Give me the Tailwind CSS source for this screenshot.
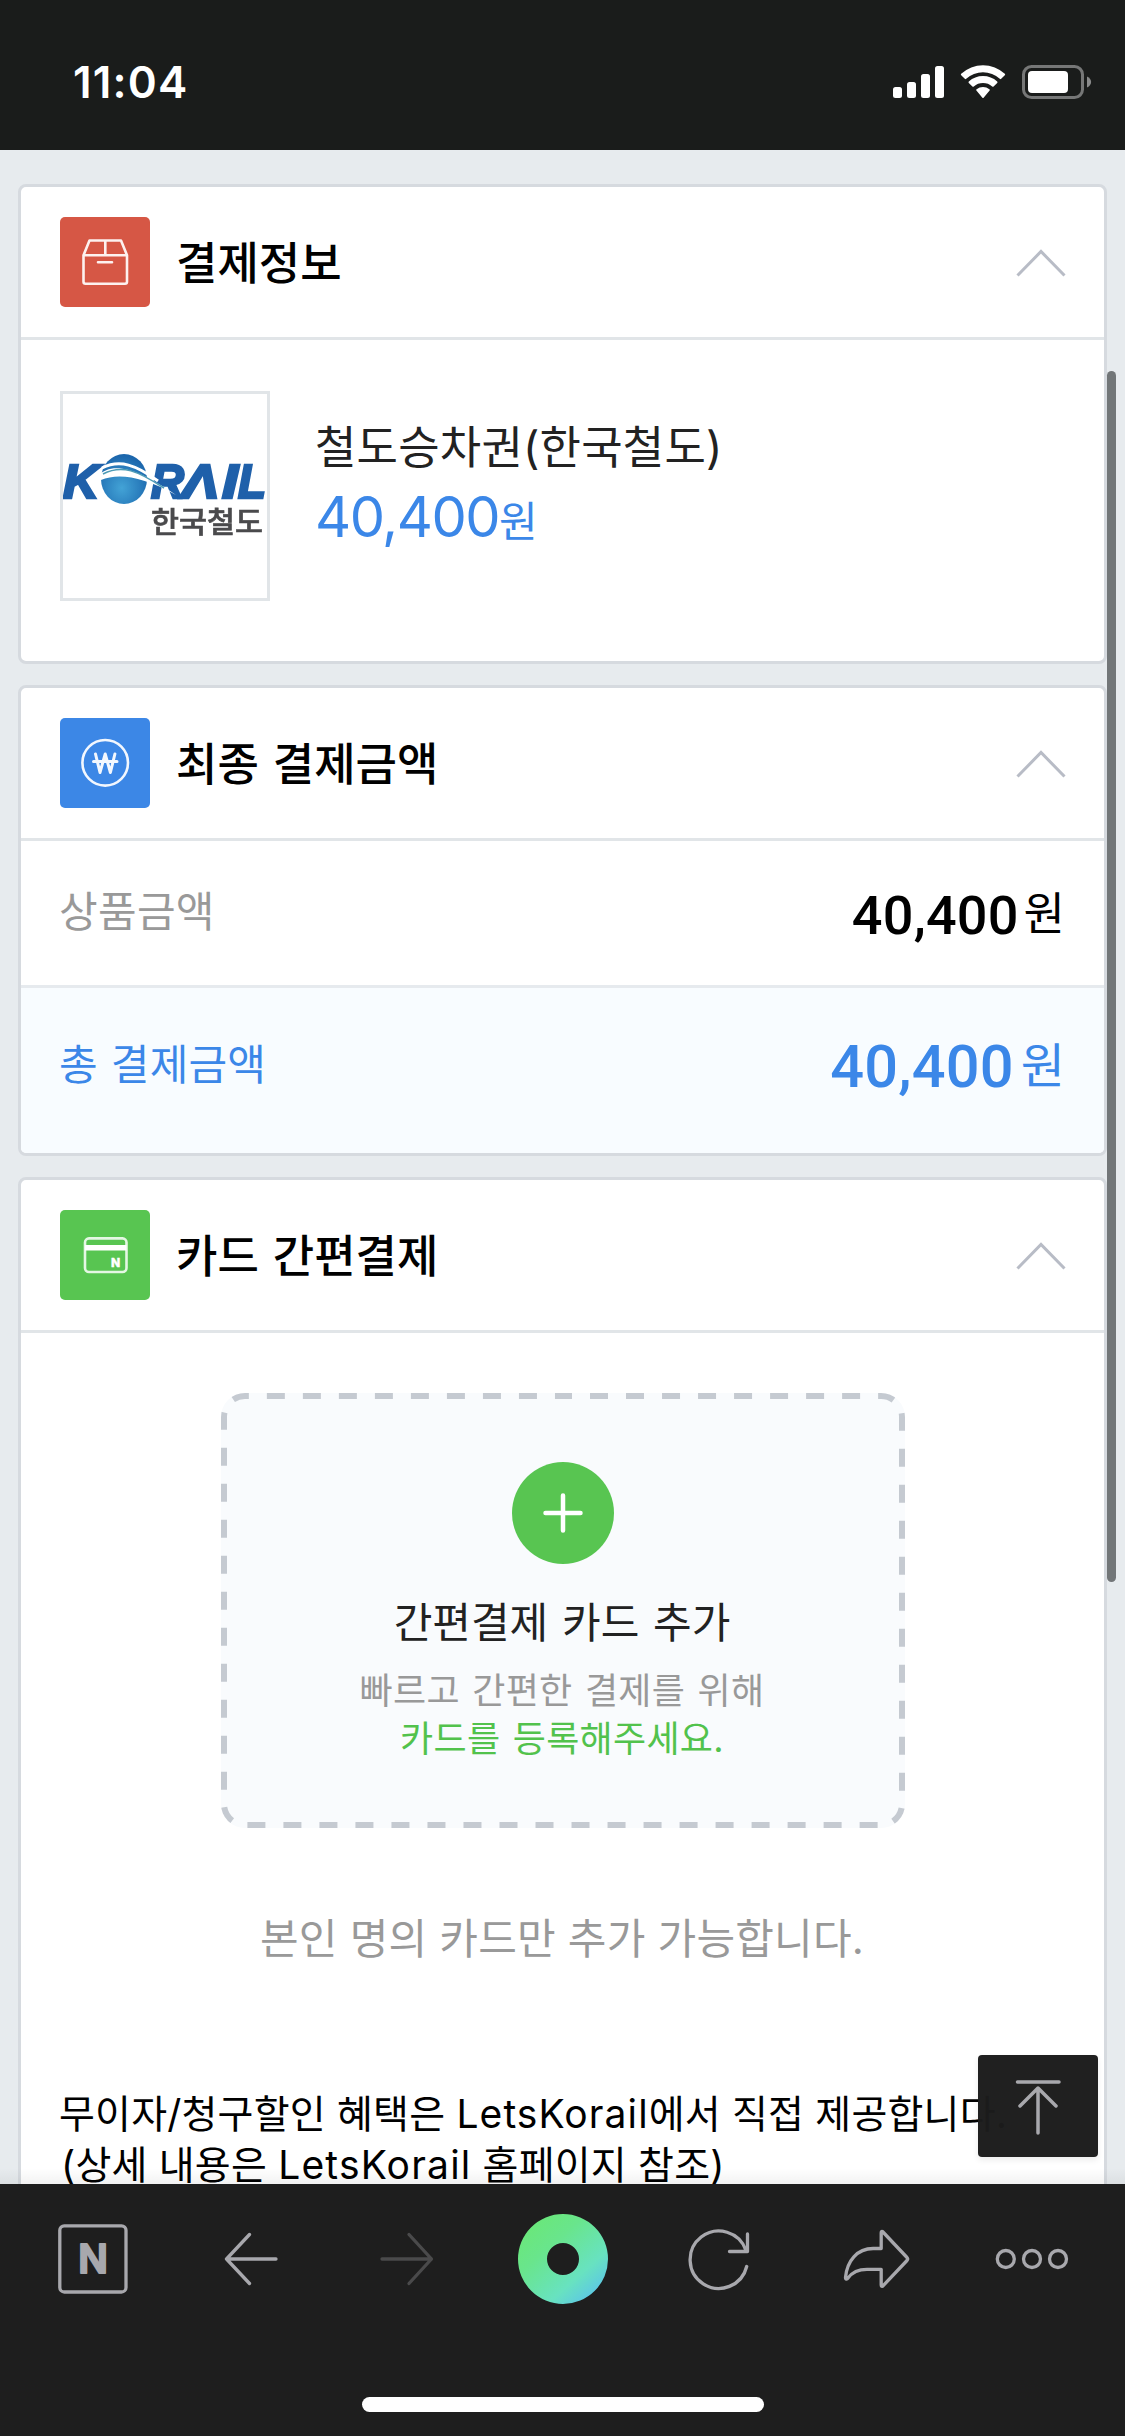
<!DOCTYPE html>
<html lang="ko">
<head>
<meta charset="utf-8">
<title>결제</title>
<script src="https://cdn.jsdelivr.net/npm/@tailwindcss/browser@4"></script>
</head>
<body class="w-[1125px] h-[2436px] overflow-hidden bg-[#e7ebee] font-['Inter','Noto_Sans_CJK_KR',sans-serif] text-black">
<div class="relative flex h-full flex-col">

  <!-- status bar -->
  <header class="flex h-[150px] shrink-0 items-center justify-between bg-[#1a1c1b] pt-[14px] pl-[73px] pr-[33px] text-white">
    <span class="text-[44px] leading-[50px] font-semibold tracking-[1.2px]">11:04</span>
    <svg class="h-[36px] w-[199px]" viewBox="893 64 199 36" fill="#fff">
      <rect x="893" y="87" width="9" height="11" rx="2.5"/>
      <rect x="907" y="82" width="9" height="16" rx="2.5"/>
      <rect x="921" y="74" width="9" height="24" rx="2.5"/>
      <rect x="935" y="66" width="9" height="32" rx="2.5"/>
      <path d="M961.2 73.8a32 32 0 0 1 43.6 0a1 1 0 0 1 0 1.4l-3.600 3.600a1 1 0 0 1-1.400 0a25 25 0 0 0-33.600 0a1 1 0 0 1-1.400 0l-3.600-3.600a1 1 0 0 1 0-1.400z"/>
      <path d="M968.800 81.600a21 21 0 0 1 28.400 0a1 1 0 0 1 0 1.400l-3.600 3.500a1 1 0 0 1-1.400 0a14 14 0 0 0-18.400 0a1 1 0 0 1-1.400 0l-3.600-3.500a1 1 0 0 1 0-1.400z"/>
      <path d="M976.600 89.200a10.500 10.500 0 0 1 12.800 0a1 1 0 0 1 0 1.600l-5.600 6.600a1 1 0 0 1-1.600 0l-5.600-6.600a1 1 0 0 1 0-1.600z"/>
      <rect x="1023.500" y="66.500" width="59" height="31" rx="8" fill="none" stroke="#767777" stroke-width="3"/>
      <rect x="1028" y="71" width="40" height="22" rx="4"/>
      <path d="M1087 76.500c5.500 2.500 5.500 8.500 0 11z" fill="#8a8b8b"/>
    </svg>
  </header>

  <main class="flex min-h-0 flex-1 flex-col gap-[21px] overflow-hidden pt-[34px] px-[18px]">

    <section class="h-[480px] w-[1089px] shrink-0 rounded-[8px] border-[3px] border-[#d6dadf] bg-white">
      <div class="flex h-[153px] items-center border-b-[3px] border-[#e1e5e8] px-[39px]">
        <svg class="size-[90px] rounded-[5px] bg-[#d65745]" viewBox="0 0 90 90" fill="none" stroke="#fdf1ef" stroke-width="2.600" stroke-linejoin="round" stroke-linecap="round">
          <path d="M23.500 38.300h43.500v26.500a2 2 0 0 1-2 2H25.500a2 2 0 0 1-2-2zM23.500 38.300L29.500 23.500h31.500l6 14.800M45.300 23.500v14.800M38 45.200h14"/>
        </svg>
        <h2 class="ml-[26px] pt-[3px] text-[45px] leading-[60px] font-medium">결제정보</h2>
        <svg class="ml-auto mt-[1px] mr-[-1px] h-[28px] w-[50px]" viewBox="0 0 50 28" fill="none" stroke="#b8bcc6" stroke-width="3"><path d="M1.500 26.500L25 2.500l23.500 24"/></svg>
      </div>
      <div class="flex px-[39px] pt-[51px]">
        <div class="size-[210px] border-[3px] border-[#e1e5e8]">
          <svg class="size-[204px] blur-[0.7px]" viewBox="63 394 204 204">
            <defs>
              <radialGradient id="globe" cx="45%" cy="68%" r="65%"><stop offset="0" stop-color="#43a3d6"/><stop offset="0.600" stop-color="#2b7fbe"/><stop offset="1" stop-color="#1c66ac"/></radialGradient>
            </defs>
            <g fill="#1f60aa" stroke="#1f60aa" stroke-width="2.600" font-family="Liberation Sans" font-weight="700" font-style="italic" font-size="48">
              <text x="63" y="498" textLength="36" lengthAdjust="spacingAndGlyphs">K</text>
              <text x="151" y="498" textLength="33" lengthAdjust="spacingAndGlyphs">R</text>
              <text x="182" y="498" textLength="37" lengthAdjust="spacingAndGlyphs">Λ</text>
              <text x="222" y="498" textLength="16" lengthAdjust="spacingAndGlyphs">I</text>
              <text x="238" y="498" textLength="28" lengthAdjust="spacingAndGlyphs">L</text>
            </g>
            <ellipse cx="124" cy="479" rx="23" ry="25" fill="url(#globe)"/>
            <path d="M98 476C112 461 137 468 176 495C142 476 118 473 101 480z" fill="#fff"/>
            <path d="M102 468C120 459 136 465 158 481" fill="none" stroke="#fff" stroke-width="3"/>
            <path d="M103 474C122 464 138 471 164 488" fill="none" stroke="#4d9bb5" stroke-width="1.500"/>
            <text x="151" y="533" textLength="112" lengthAdjust="spacingAndGlyphs" font-size="29" font-weight="500" stroke="#4a4a4c" stroke-width="0.600" fill="#4a4a4c" font-family="Noto Sans CJK KR">한국철도</text>
          </svg>
        </div>
        <div class="ml-[45px] mt-[32px] flex flex-col gap-2">
          <p class="text-[45px] leading-[50px] tracking-[0.2px] text-[#222]">철도승차권(한국철도)</p>
          <p class="text-[56px] leading-[72px] text-[#3b87e8]"><span class="tracking-[-1.5px]">40,400</span><span class="text-[42px]">원</span></p>
        </div>
      </div>
    </section>

    <section class="h-[471px] w-[1089px] shrink-0 overflow-hidden rounded-[8px] border-[3px] border-[#d6dadf] bg-white">
      <div class="flex h-[153px] items-center border-b-[3px] border-[#e1e5e8] px-[39px]">
        <svg class="size-[90px] rounded-[5px] bg-[#3c87e6]" viewBox="0 0 90 90" fill="none" stroke="#f2f7fe" stroke-width="2.600" stroke-linejoin="round" stroke-linecap="round">
          <circle cx="45.200" cy="44.800" r="22.800"/>
          <path stroke-width="3" d="M35.500 36l4.500 18.500L45.200 36L50.400 54.500l4.500-18.500M33.500 43.500h23.500"/>
        </svg>
        <h2 class="ml-[26px] pt-[3px] text-[45px] leading-[60px] font-medium [word-spacing:2px]">최종 결제금액</h2>
        <svg class="ml-auto mt-[1px] mr-[-1px] h-[28px] w-[50px]" viewBox="0 0 50 28" fill="none" stroke="#b8bcc6" stroke-width="3"><path d="M1.500 26.500L25 2.500l23.500 24"/></svg>
      </div>
      <div class="flex h-[147px] items-center border-b-[3px] border-[#e6eaee] px-[39px]">
        <span class="-mt-[2px] -ml-[1px] text-[42px] leading-[60px] tracking-[0.3px] text-[#999]">상품금액</span>
        <span class="ml-auto mt-[5px] font-['Roboto',sans-serif] text-[54px] leading-[60px] font-medium tracking-[0.2px]">40,400</span>
        <span class="ml-[5px] mt-[1px] text-[45px] leading-[60px]">원</span>
      </div>
      <div class="flex h-[165px] items-center bg-[#f8fcff] px-[39px] pb-[10px] text-[#3b87e8]">
        <span class="-mt-[2px] -ml-[1px] text-[42px] leading-[60px] [word-spacing:1px] tracking-[0.2px]">총 결제금액</span>
        <span class="ml-auto mt-[3px] font-['Roboto',sans-serif] text-[59.5px] leading-[60px] font-medium tracking-[0.2px]">40,400</span>
        <span class="ml-[7px] text-[48px] leading-[60px]">원</span>
      </div>
    </section>

    <section class="h-[1100px] w-[1089px] shrink-0 rounded-t-[8px] border-[3px] border-[#d6dadf] bg-white">
      <div class="flex h-[153px] items-center border-b-[3px] border-[#e1e5e8] px-[39px]">
        <svg class="size-[90px] rounded-[5px] bg-[#58c551]" viewBox="0 0 90 90" fill="none" stroke="#e4f7e3" stroke-width="2.600">
          <rect x="25" y="28.400" width="41.500" height="33.600" rx="4"/>
          <path d="M25 37.800h41.500" stroke="#fff" stroke-width="5.500"/>
          <text x="51" y="56.500" fill="#fff" stroke="#fff" stroke-width="0.400" font-family="Inter" font-weight="800" font-size="12">N</text>
        </svg>
        <h2 class="ml-[26px] pt-[3px] text-[45px] leading-[60px] font-medium [word-spacing:2px]">카드 간편결제</h2>
        <svg class="ml-auto mt-[1px] mr-[-1px] h-[28px] w-[50px]" viewBox="0 0 50 28" fill="none" stroke="#b8bcc6" stroke-width="3"><path d="M1.500 26.500L25 2.500l23.500 24"/></svg>
      </div>

      <div class="relative ml-[200px] mt-[60px] flex h-[435px] w-[684px] flex-col items-center overflow-hidden rounded-[24px] bg-[#f9fbfd] pt-[69px]">
        <svg class="absolute inset-0 size-full" viewBox="0 0 684 435" fill="none">
          <path d="M342 0H660A24 24 0 0 1 684 24V411A24 24 0 0 1 660 435H24A24 24 0 0 1 0 411V24A24 24 0 0 1 24 0z" stroke="#c5cad1" stroke-width="12" stroke-dasharray="18 18.013" stroke-dashoffset="9"/>
        </svg>
        <svg class="size-[102px] shrink-0 rounded-full bg-[#58c551]" viewBox="0 0 102 102" stroke="#fff" stroke-width="4.500" stroke-linecap="round"><path d="M33.500 51h35M51 33.500v35"/></svg>
        <p class="mt-[34px] -ml-[2px] text-[42px] leading-[50px] [word-spacing:2px] text-[#222]">간편결제 카드 추가</p>
        <p class="mt-[19px] -ml-[2px] text-center text-[36px] leading-[48px] tracking-[0.3px] [word-spacing:2px] text-[#999]">빠르고 간편한 결제를 위해<br><span class="text-[#52c24c]">카드를 등록해주세요.</span></p>
      </div>

      <p class="mt-[81px] -ml-[1px] text-center text-[42px] leading-[60px] tracking-[0.2px] text-[#999]">본인 명의 카드만 추가 가능합니다.</p>
      <p class="mt-[119px] ml-[38px] text-[39px] leading-[51px] tracking-[0.2px] whitespace-nowrap">무이자/청구할인 혜택은 <span class="tracking-[1.1px]">LetsKorail</span>에서 직접 제공합니다.<br><span class="ml-[2px]">(상세 내용은 <span class="tracking-[1.2px]">LetsKorail</span> 홈페이지 참조)</span></p>
    </section>
  </main>

  <!-- browser toolbar -->
  <nav class="relative flex h-[252px] shrink-0 flex-col items-center bg-[#1e1e1e]">
    <div class="absolute inset-x-0 -top-[16px] h-[16px] bg-linear-to-b from-black/0 to-black/5"></div>
    <svg class="h-[150px] w-[1125px]" viewBox="0 2184 1125 150" fill="none" stroke="#a8a8ad" stroke-width="3.300" stroke-linecap="round" stroke-linejoin="round">
      <defs>
        <linearGradient id="ring" x1="0.150" y1="0.100" x2="0.880" y2="0.920"><stop offset="0" stop-color="#6ae77a"/><stop offset="0.300" stop-color="#69e58c"/><stop offset="0.720" stop-color="#68e2c0"/><stop offset="1" stop-color="#5bc4ea"/></linearGradient>
      </defs>
      <rect x="59.800" y="2225.800" width="66.200" height="66.200" rx="4.500"/>
      <text x="93" y="2273.300" text-anchor="middle" fill="#a8a8ad" stroke-width="2" font-family="Inter" font-weight="600" font-size="39">N</text>
      <path d="M276 2259H226.500M249.500 2234.500L226.500 2259l23 24.500"/>
      <path stroke="#4a4a4b" d="M382 2259h49.500M409 2234.500l22.500 24.500l-22.500 24.500"/>
      <path fill="url(#ring)" fill-rule="evenodd" stroke="none" d="M518 2259a45 45 0 1 0 90 0a45 45 0 1 0-90 0zM547 2259a16 16 0 1 1 32 0a16 16 0 1 1-32 0z"/>
      <path d="M746.700 2266.500A28.700 28.700 0 1 1 746 2250.500M747.500 2234v17.500h-18"/>
      <path d="M882.500 2231.500q-1.300-.500-1.300 1.500v15.500h-8C857 2248.500 847 2261 845.500 2277.500c0 2 1.500 2 2.500 .500c5-7 11-8.700 19-8.700h14.200v15.500q0 2 1.300 1.500L907 2260.500q1.300-1.500 0-3z"/>
      <circle cx="1005.800" cy="2259" r="8.500"/><circle cx="1032" cy="2259" r="8.500"/><circle cx="1058" cy="2259" r="8.500"/>
    </svg>
    <div class="mt-[63px] h-[15px] w-[402px] rounded-full bg-white"></div>
  </nav>

  <!-- scroll thumb -->
  <div class="absolute top-[371px] right-[9px] h-[1211px] w-[9px] rounded-full bg-[#727678]"></div>

  <!-- scroll-to-top button -->
  <button class="absolute top-[2055px] left-[978px] flex h-[102px] w-[120px] rounded-[4px] bg-[#1c1c1c]/98 shadow-[0_3px_6px_rgba(0,0,0,0.08)]">
    <svg class="h-[102px] w-[120px]" viewBox="978 2055 120 102" fill="none" stroke="#a8a8ad" stroke-width="3.500" stroke-linecap="round" stroke-linejoin="round"><path d="M1017.500 2082h41.500M1038 2133v-45M1020 2106l18-18l18 18"/></svg>
  </button>
</div>
</body>
</html>
